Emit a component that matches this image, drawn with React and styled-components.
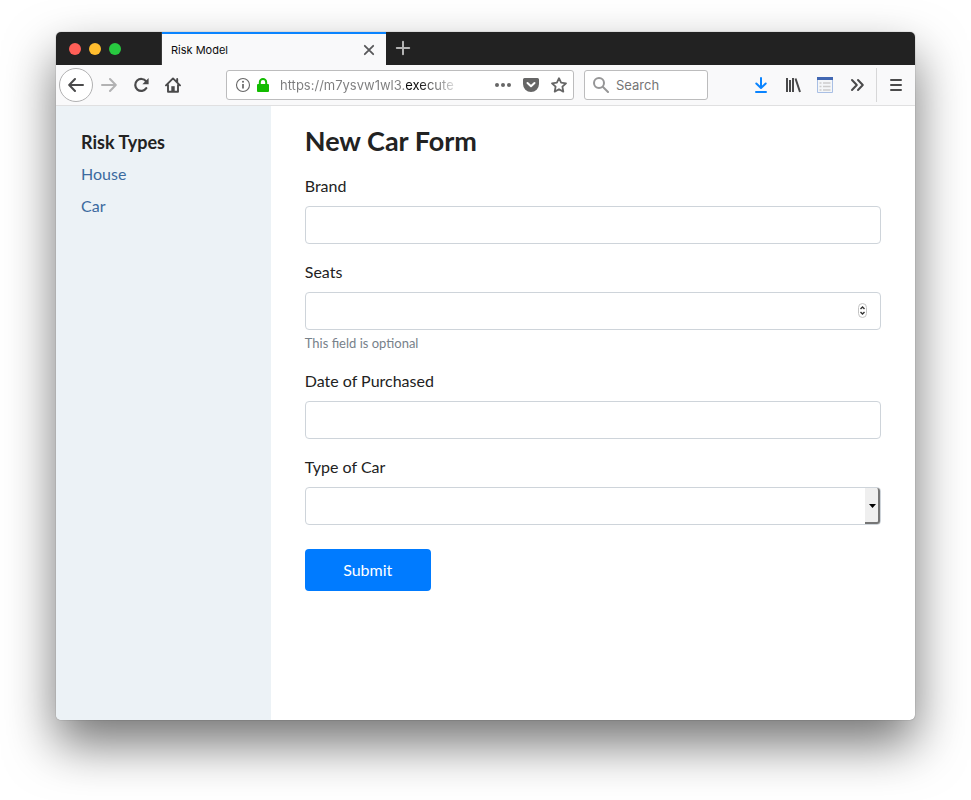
import React from 'react';
import styled, { createGlobalStyle } from 'styled-components';

const GlobalStyle = createGlobalStyle`
  *, *::before, *::after { box-sizing: border-box; }
  body {
    margin: 0;
    background: #fff;
    color: #212529;
    font-family: Lato, "Open Sans", sans-serif;
    font-size: 16px;
    line-height: 24px;
  }
  button, input, select { font: inherit; color: inherit; margin: 0; }
`;

const Desktop = styled.div`
  display: flex;
  min-height: 100vh;
  padding: 32px 56px 80px;
  overflow: hidden;
`;

const BrowserWindow = styled.div`
  flex: 1;
  min-width: 0;
  display: flex;
  flex-direction: column;
  border-radius: 5px;
  background: #fff;
  box-shadow: 0 0 1px rgba(0, 0, 0, 0.6), 0 24px 50px rgba(0, 0, 0, 0.55);
`;

const TitleBar = styled.header`
  display: flex;
  height: 33px;
  border-radius: 5px 5px 0 0;
  background: #222;
  font-family: Inter, sans-serif;
`;

const Lights = styled.div`
  display: flex;
  align-items: center;
  gap: 8px;
  width: 106px;
  padding-left: 13px;
  border-right: 1px solid #3a3a3a;
`;

const Light = styled.button`
  width: 12px;
  height: 12px;
  padding: 0;
  border: 0;
  border-radius: 50%;
  background: ${(p) => p.$color};
`;

const Tab = styled.div`
  display: flex;
  align-items: center;
  justify-content: space-between;
  width: 224px;
  padding: 0 8px 0 9px;
  border-top: 2px solid #0a84ff;
  background: #f9f9fa;
  color: #0c0c0d;
  font-size: 11px;
`;

const PlainButton = styled.button`
  display: flex;
  align-items: center;
  justify-content: center;
  flex: none;
  width: ${(p) => p.$width || 32}px;
  height: ${(p) => p.$height || 32}px;
  padding: 0;
  border: 0;
  background: none;
  color: ${(p) => p.$color || '#4a4a4b'};
`;

const Toolbar = styled.nav`
  display: flex;
  align-items: center;
  height: 41px;
  padding: 0 3px;
  border-bottom: 1px solid #e0e0e1;
  background: #f9f9fa;
  font-family: Inter, sans-serif;
  font-size: 13px;
`;

const BackButton = styled(PlainButton)`
  border: 1px solid #b1b1b2;
  border-radius: 50%;
  background: #fff;
`;

const Field = styled.div`
  display: flex;
  align-items: center;
  height: 30px;
  border: 1px solid #bcbcbd;
  border-radius: 3px;
  background: #fff;
`;

const AddressBar = styled(Field)`
  flex: 1;
  min-width: 0;
  margin: 0 10px 0 37px;
  padding-left: 8px;
`;

const AddressInput = styled.input`
  flex: 0 1 180px;
  min-width: 0;
  height: 28px;
  margin: 0 auto 0 10px;
  padding: 0;
  border: 0;
  outline: 0;
  background: linear-gradient(to right, #7c7c7d 125px, #0c0c0d 126px, #0c0c0d 138px, transparent 180px);
  background-clip: text;
  -webkit-background-clip: text;
  color: transparent;
`;

const LockIcon = styled.svg`
  margin-left: 5px;
  flex: none;
`;

const SearchBar = styled(Field)`
  width: 124px;
  margin-right: 37px;
  padding-left: 8px;
  gap: 7px;
`;

const SearchInput = styled.input`
  flex: 1;
  min-width: 0;
  padding: 0;
  border: 0;
  outline: 0;
  background: none;
  &::placeholder { color: #757576; opacity: 1; }
`;

const Separator = styled.span`
  width: 1px;
  height: 34px;
  margin: 0 3px;
  background: #d7d7d8;
`;

const Page = styled.div`
  flex: 1;
  display: grid;
  grid-template-columns: 1fr 3fr;
`;

const Sidebar = styled.aside`
  display: flex;
  flex-direction: column;
  align-items: flex-start;
  gap: 8px;
  padding: 24px 25px;
  border-radius: 0 0 0 5px;
  background: #ecf2f6;
`;

const SidebarTitle = styled.h2`
  margin: 0;
  font-size: 18px;
  line-height: 24px;
  font-weight: 700;
  color: #222;
`;

const SidebarLink = styled.a`
  color: #3b6a9f;
  text-decoration: none;
`;

const Main = styled.main`
  padding: 18px 34px 34px;
`;

const Title = styled.h1`
  margin: 0 0 16px;
  font-size: 27px;
  line-height: 34px;
  font-weight: 700;
  color: #222;
`;

const Form = styled.form`
  display: flex;
  flex-direction: column;
  align-items: flex-start;
  gap: 16px;
`;

const Group = styled.div`
  display: flex;
  flex-direction: column;
  width: 100%;
`;

const Label = styled.label`
  margin-bottom: 8px;
  color: #222;
`;

const Hint = styled.small`
  margin-top: 4px;
  font-size: 13px;
  line-height: 19px;
  color: #77818a;
`;

const ControlBox = styled.div`
  position: relative;
  display: flex;
`;

const Input = styled.input`
  width: 100%;
  height: 38px;
  padding: 6px 12px;
  border: 1px solid #ced4da;
  border-radius: 4px;
  background: #fff;
  appearance: textfield;
  &::-webkit-inner-spin-button { display: none; }
`;

const Select = styled(Input)`
  appearance: none;
`;

const Spinner = styled.span`
  position: absolute;
  top: 11px;
  right: 14px;
  display: flex;
  width: 9px;
  height: 15px;
  border: 1px solid #c4c4c4;
  border-radius: 5px;
  pointer-events: none;
`;

const DropArrow = styled.span`
  position: absolute;
  top: 1px;
  right: 1px;
  bottom: 1px;
  display: flex;
  align-items: center;
  justify-content: center;
  width: 15px;
  padding: 2px 0 0 2px;
  border-right: 2px solid #757575;
  border-bottom: 2px solid #757575;
  border-radius: 0 3px 3px 0;
  background: #efefef;
  pointer-events: none;
`;

const Submit = styled.button`
  width: 126px;
  height: 42px;
  margin-top: 8px;
  border: 0;
  border-radius: 4px;
  background: #007bff;
  color: #fff;
`;

const Icon = ({ children, size = 16, stroke = 2 }) => (
  <svg width={size} height={size} viewBox="0 0 16 16" fill="none" stroke="currentColor" strokeWidth={stroke} strokeLinecap="round" strokeLinejoin="round" aria-hidden="true">
    {children}
  </svg>
);

function FormField({ id, label, hint, children }) {
  return (
    <Group>
      <Label htmlFor={id}>{label}</Label>
      <ControlBox>{children}</ControlBox>
      {hint && <Hint>{hint}</Hint>}
    </Group>
  );
}

export default function App() {
  return (
    <>
      <GlobalStyle />
      <Desktop>
        <BrowserWindow>
          <TitleBar>
            <Lights>
              <Light $color="#ff5f57" aria-label="Close window" />
              <Light $color="#ffbd2e" aria-label="Minimize window" />
              <Light $color="#28c940" aria-label="Zoom window" />
            </Lights>
            <Tab>
              Risk Model
              <PlainButton $width={18} $height={18} $color="#58585a" aria-label="Close tab">
                <Icon stroke="1.8"><path d="M3.8 3.8l8.400 8.400M12.200 3.800l-8.400 8.400" /></Icon>
              </PlainButton>
            </Tab>
            <PlainButton $width={34} $color="#b4b4b4" aria-label="New tab">
              <Icon stroke="2"><path d="M8 1.8v12.4M1.8 8h12.4" /></Icon>
            </PlainButton>
          </TitleBar>
          <Toolbar>
            <BackButton $width={34} $height={34} aria-label="Back">
              <Icon><path d="M15 8H1.5M7 2L1.2 8 7 14" /></Icon>
            </BackButton>
            <PlainButton $color="#b2b2b3" aria-label="Forward">
              <Icon><path d="M1 8h13.5M9 2l5.8 6L9 14" /></Icon>
            </PlainButton>
            <PlainButton aria-label="Reload">
              <Icon stroke="2.2">
                <path d="M13.300 11.2A6 6 0 1 1 13.100 4.400" />
                <path d="M15.600 1v6.200H9.400z" fill="currentColor" stroke="none" />
              </Icon>
            </PlainButton>
            <PlainButton aria-label="Home">
              <Icon stroke="1.9">
                <path d="M1 8.4L8 1.4l7 7M3 8v6.8h10V8M12.2 2v3" />
                <path d="M6.3 14.5V9.2h3.4v5.3z" fill="currentColor" stroke="none" />
              </Icon>
            </PlainButton>
            <AddressBar>
              <svg width="16" height="16" viewBox="0 0 16 16" fill="none" stroke="#666" aria-hidden="true">
                <circle cx="8" cy="8" r="6.5" strokeWidth="1.1" />
                <path d="M8 7v4.4" strokeWidth="1.7" />
                <circle cx="8" cy="4.8" r="1" fill="#666" stroke="none" />
              </svg>
              <LockIcon width="14" height="16" viewBox="0 0 14 16" fill="none" aria-hidden="true">
                <path d="M3.8 8V5.2a3.2 3.2 0 0 1 6.4 0V8" stroke="#12bc00" strokeWidth="2" />
                <rect x="1" y="7" width="12" height="8" rx="1" fill="#12bc00" />
              </LockIcon>
              <AddressInput aria-label="Address" defaultValue="https://m7ysvw1wl3.execute" />
              <PlainButton $width={28} $height={28} $color="#666" aria-label="Page actions">
                <Icon stroke="0"><g fill="currentColor"><circle cx="2" cy="8" r="2" /><circle cx="8" cy="8" r="2" /><circle cx="14" cy="8" r="2" /></g></Icon>
              </PlainButton>
              <PlainButton $width={28} $height={28} $color="#666" aria-label="Save to Pocket">
                <Icon>
                  <path d="M1.5 1h13A1.5 1.5 0 0 1 16 2.500V7A8 8 0 0 1 0 7V2.500A1.500 1.500 0 0 1 1.500 1z" fill="currentColor" stroke="none" />
                  <path d="M4.500 6L8 9.300 11.500 6" stroke="#fff" />
                </Icon>
              </PlainButton>
              <PlainButton $width={28} $height={28} $color="#666" aria-label="Bookmark">
                <Icon stroke="1.8"><path d="M8 1.200l2.100 4.500 4.900.6-3.600 3.400.9 4.900L8 12.200l-4.300 2.400.9-4.900L1 6.300l4.900-.6z" /></Icon>
              </PlainButton>
            </AddressBar>
            <SearchBar>
              <svg width="16" height="16" viewBox="0 0 16 16" fill="none" stroke="#969697" strokeWidth="2" strokeLinecap="round" aria-hidden="true">
                <circle cx="6" cy="6" r="5" /><path d="M10 10l5 5" />
              </svg>
              <SearchInput type="text" aria-label="Search" placeholder="Search" />
            </SearchBar>
            <PlainButton $color="#0a84ff" aria-label="Downloads">
              <Icon><path d="M8 1v9.500M3.300 6.500L8 11l4.700-4.500M3 15h10" /></Icon>
            </PlainButton>
            <PlainButton aria-label="Library">
              <Icon><path d="M2 1v14M5 3v12M8 1v14M10.500 1.500L15 15" strokeLinecap="butt" /></Icon>
            </PlainButton>
            <PlainButton aria-label="Forms">
              <svg width="16" height="16" viewBox="0 0 16 16" aria-hidden="true">
                <path d="M.5.500h15v15H.5z" fill="#f4f6f8" stroke="#a9bfe4" />
                <path d="M0 0h16v3H0z" fill="#4267b2" />
                <path d="M2.500 6h2M6 6h7.500M2.500 9.500h2M6 9.500h7.500M2.500 13h2M6 13h7.500" stroke="#ccc" strokeWidth="1.500" />
              </svg>
            </PlainButton>
            <PlainButton aria-label="More tools">
              <Icon><path d="M3 3L7.800 8l-4.800 5M9 3l4.800 5-4.800 5" /></Icon>
            </PlainButton>
            <Separator />
            <PlainButton aria-label="Menu">
              <Icon><path d="M3 3h10M3 8h10M3 13h10" /></Icon>
            </PlainButton>
          </Toolbar>
          <Page>
            <Sidebar>
              <SidebarTitle>Risk Types</SidebarTitle>
              <SidebarLink href="#house">House</SidebarLink>
              <SidebarLink href="#car">Car</SidebarLink>
            </Sidebar>
            <Main>
              <Title>New Car Form</Title>
              <Form onSubmit={(e) => e.preventDefault()}>
                <FormField id="brand" label="Brand">
                  <Input id="brand" type="text" />
                </FormField>
                <FormField id="seats" label="Seats" hint="This field is optional">
                  <Input id="seats" type="number" />
                  <Spinner>
                    <svg width="7" height="13" viewBox="0 0 7 13" fill="none" stroke="#333" strokeWidth="1.400" aria-hidden="true">
                      <path d="M1.500 5l2-2 2 2M1.500 8l2 2 2-2" />
                    </svg>
                  </Spinner>
                </FormField>
                <FormField id="purchased" label="Date of Purchased">
                  <Input id="purchased" type="text" />
                </FormField>
                <FormField id="car-type" label="Type of Car">
                  <Select as="select" id="car-type"><option value="" aria-label="None" /></Select>
                  <DropArrow>
                    <svg width="7" height="4" viewBox="0 0 7 4" aria-hidden="true"><path d="M0 0h7L3.500 4z" /></svg>
                  </DropArrow>
                </FormField>
                <Submit type="submit">Submit</Submit>
              </Form>
            </Main>
          </Page>
        </BrowserWindow>
      </Desktop>
    </>
  );
}
